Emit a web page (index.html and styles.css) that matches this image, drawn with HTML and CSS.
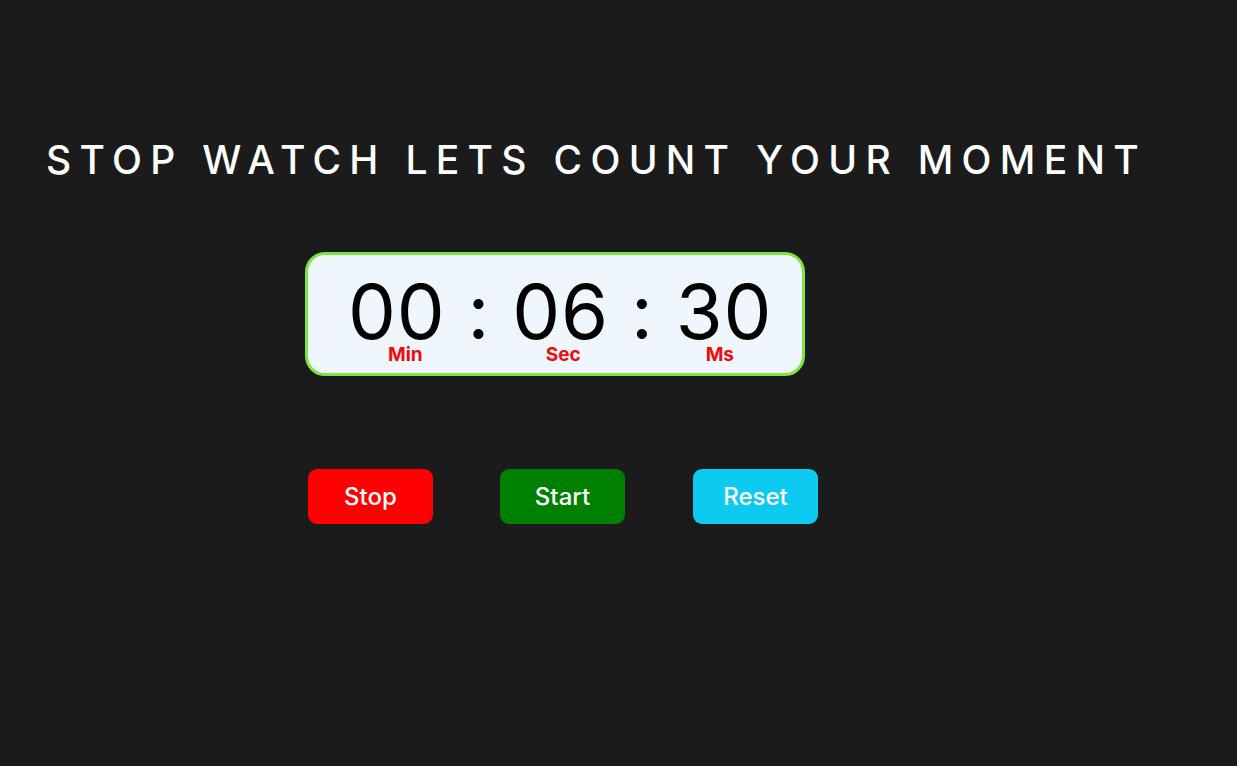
FILE: index.html
```html
<!DOCTYPE html>
<html lang="en">
<head>
<meta charset="utf-8">
<title>Stop Watch</title>
<link rel="stylesheet" href="styles.css">
</head>
<body>
<main class="page">
  <h1 class="title">STOP WATCH LETS COUNT YOUR MOMENT</h1>
  <section class="timer">
    <div class="digits">00 : 06 : 30</div>
    <div class="labels">
      <span class="label label-min">Min</span>
      <span class="label label-sec">Sec</span>
      <span class="label label-ms">Ms</span>
    </div>
  </section>
  <div class="controls">
    <button class="btn btn-stop">Stop</button>
    <button class="btn btn-start">Start</button>
    <button class="btn btn-reset">Reset</button>
  </div>
</main>
</body>
</html>
```

FILE: styles.css
```css
html, body {
  margin: 0;
  padding: 0;
  background: #1b1b1b;
  height: 100%;
}
body {
  font-family: Inter, "Noto Sans", "Liberation Sans", sans-serif;
}
.page {
  padding: 132px 0 0 46px;
}
.title {
  margin: 0;
  color: #ffffff;
  font-size: 39px;
  font-weight: 500;
  letter-spacing: 8.3px;
  line-height: 56px;
  white-space: nowrap;
}
.timer {
  margin: 64px 0 0 259px;
  width: 494px;
  height: 118px;
  box-sizing: content-box;
  border: 3px solid #7fe43f;
  border-radius: 20px;
  background: #eff7fd;
}
.digits {
  padding: 14px 0 0 40px;
  font-size: 76px;
  line-height: 84px;
  color: #000;
  font-weight: 400;
  letter-spacing: 0.01em;
  white-space: pre;
}
.labels {
  display: flex;
  margin-top: -9px;
  padding-left: 80px;
}
.label {
  color: #f20b0b;
  font-weight: 700;
  font-size: 19px;
  line-height: 22px;
}
.label-sec { margin-left: 123px; }
.label-ms { margin-left: 125px; }
.controls {
  display: flex;
  gap: 67px;
  margin: 93px 0 0 262px;
}
.btn {
  width: 125px;
  height: 55px;
  border: none;
  border-radius: 9px;
  color: #fff;
  font-family: inherit;
  font-size: 24px;
  font-weight: 500;
  padding: 0;
}
.btn-reset { margin-left: 1px; }
.btn-stop { background: #ff0000; }
.btn-start { background: #008000; }
.btn-reset { background: #0dcaf0; }
```
